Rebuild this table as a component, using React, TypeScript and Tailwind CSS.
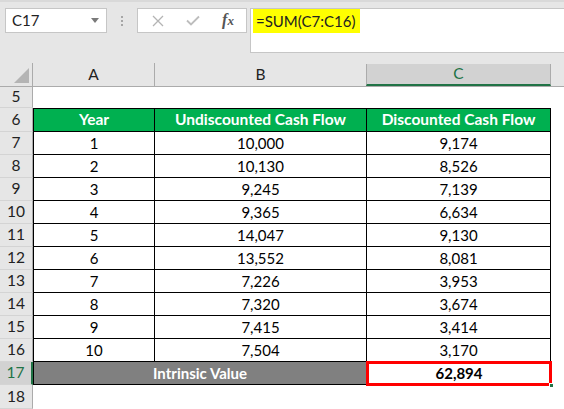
import React from 'react';

const rows = [
  { year: '1', raw: '10,000', disc: '9,174' },
  { year: '2', raw: '10,130', disc: '8,526' },
  { year: '3', raw: '9,245', disc: '7,139' },
  { year: '4', raw: '9,365', disc: '6,634' },
  { year: '5', raw: '14,047', disc: '9,130' },
  { year: '6', raw: '13,552', disc: '8,081' },
  { year: '7', raw: '7,226', disc: '3,953' },
  { year: '8', raw: '7,320', disc: '3,674' },
  { year: '9', raw: '7,415', disc: '3,414' },
  { year: '10', raw: '7,504', disc: '3,170' },
];

function RowHead({ n, active = false }: { n: number; active?: boolean }) {
  return (
    <div
      className={`flex w-[33px] shrink-0 items-center justify-center border-b border-r border-b-[#d4d4d4] text-[15.5px] ${
        active ? 'border-r-2 border-r-[#217346] bg-[#d2d2d2] text-[#217346]' : 'border-r-[#ababab] bg-[#e6e6e6] text-[#222]'
      }`}
    >
      {n}
    </div>
  );
}

export default function App() {
  return (
    <div className="h-[409px] w-[564px] overflow-hidden bg-white font-['Lato',sans-serif] text-[15px] text-black">
      {/* formula bar area */}
      <div className="flex h-[63px] items-start border-t-2 border-[#d9d9d9] bg-[#e6e6e6] pl-[5px] pt-[6px]">
        <div className="flex h-[25px] w-[102px] items-center justify-between border border-[#c6c6c6] bg-white pl-[6px] pr-[7px] text-[#222]">
          <span>C17</span>
          <svg width="8" height="5" viewBox="0 0 8 5">
            <path d="M0 0h8L4 5z" fill="#7a7a7a" />
          </svg>
        </div>
        <div className="flex h-[25px] w-[30px] flex-col items-center justify-center gap-[2px]">
          <div className="h-[2px] w-[2px] bg-[#a6a6a6]" />
          <div className="h-[2px] w-[2px] bg-[#a6a6a6]" />
          <div className="h-[2px] w-[2px] bg-[#a6a6a6]" />
        </div>
        <div className="flex h-[25px] w-[110px] items-center border border-[#c6c6c6] bg-white">
          <div className="flex w-[38px] justify-center pl-[2px]">
            <svg width="12" height="12" viewBox="0 0 12 12">
              <path d="M1 1l10 10M11 1L1 11" stroke="#b4b4b4" strokeWidth="1.3" />
            </svg>
          </div>
          <div className="flex w-[34px] justify-center">
            <svg width="14" height="11" viewBox="0 0 14 11">
              <path d="M1 5.5l4 4L13 1.5" stroke="#bdbdbd" strokeWidth="1.8" fill="none" />
            </svg>
          </div>
          <div className="w-[36px] text-center font-['Liberation_Serif',serif] text-[16px] italic leading-[20px] text-[#555]">
            <span className="font-bold">f</span>
            <span className="text-[13px] font-bold">x</span>
          </div>
        </div>
        <div className="ml-[3px] h-[45px] flex-1 border border-r-0 border-[#c6c6c6] bg-white pl-[2px] pt-0">
          <span className="inline-flex h-[24px] items-center bg-[#ffff00] pl-[3px] pr-[5px] text-[15px] text-[#222]">
            =SUM(C7:C16)
          </span>
        </div>
      </div>

      {/* column headers */}
      <div className="flex h-[24px] border-b border-[#ababab] bg-[#e6e6e6] text-[15.5px] text-[#222]">
        <div className="relative w-[33px] shrink-0 border-r border-[#ababab]">
          <svg className="absolute bottom-[3px] right-[3px]" width="15" height="15" viewBox="0 0 15 15">
            <path d="M15 0V15H0z" fill="#b4b4b4" />
          </svg>
        </div>
        <div className="flex w-[122px] shrink-0 items-center justify-center border-r border-[#ababab]">A</div>
        <div className="flex w-[211px] shrink-0 items-center justify-center">B</div>
        <div className="mt-[1px] flex w-[185px] shrink-0 items-center justify-center border-x border-b-2 border-x-[#ababab] border-b-[#217346] bg-[#d2d2d2] text-[#217346]">
          C
        </div>
        <div className="flex-1" />
      </div>

      {/* row 5 */}
      <div className="flex h-[21px]">
        <RowHead n={5} />
      </div>

      {/* row 6 header */}
      <div className="flex h-[24px] text-[15.5px]">
        <RowHead n={6} />
        <div className="flex w-[122px] shrink-0 items-center justify-center border border-black bg-[#00b050] font-bold text-white">
          Year
        </div>
        <div className="flex w-[212px] shrink-0 items-center justify-center border-y border-r border-black bg-[#00b050] font-bold text-white">
          Undiscounted Cash Flow
        </div>
        <div className="flex w-[184px] shrink-0 items-center justify-center border-y border-r border-black bg-[#00b050] font-bold text-white">
          Discounted Cash Flow
        </div>
      </div>

      {rows.map((r, i) => (
        <div key={r.year} className="flex h-[23px]">
          <RowHead n={i + 7} />
          <div className="flex w-[122px] shrink-0 items-center justify-center border-x border-b border-black">
            {r.year}
          </div>
          <div className="flex w-[212px] shrink-0 items-center justify-center border-b border-r border-black">
            {r.raw}
          </div>
          <div className="flex w-[184px] shrink-0 items-center justify-center border-b border-r border-black">
            {r.disc}
          </div>
        </div>
      ))}

      {/* row 17 */}
      <div className="flex h-[23px]">
        <RowHead n={17} active />
        <div className="flex w-[334px] shrink-0 items-center justify-center border-x border-b border-black bg-[#808080] font-bold text-white">
          Intrinsic Value
        </div>
        <div className="relative flex w-[184px] shrink-0 items-center justify-center font-bold">
          <div className="absolute -left-[1px] -top-[1px] -bottom-[1px] -right-[1px] border-[3px] border-[#ff0000]" />
          <div className="absolute -bottom-[3px] -right-[3px] h-[5px] w-[5px] border border-white bg-[#217346]" />
          <span className="relative">62,894</span>
        </div>
      </div>

      {/* row 18 */}
      <div className="flex h-[24px]">
        <RowHead n={18} />
      </div>
    </div>
  );
}
